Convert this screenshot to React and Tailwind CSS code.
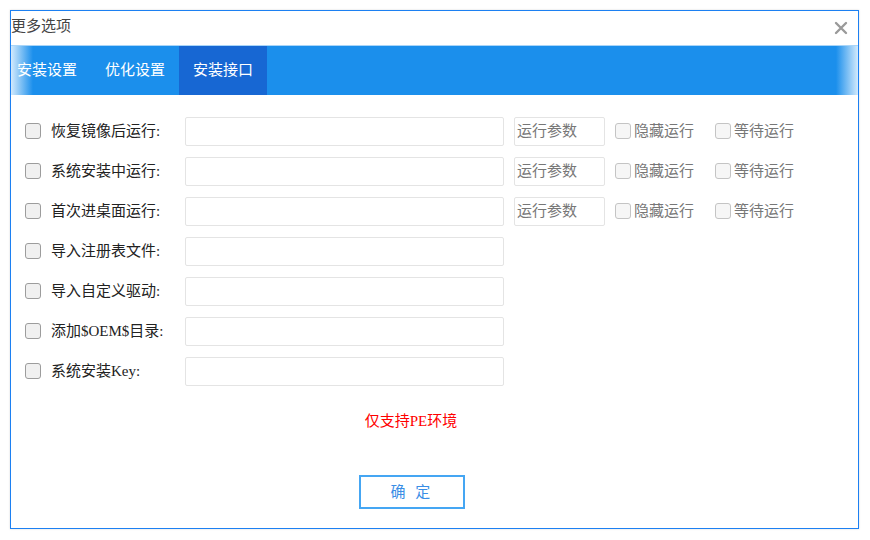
import React from "react";

const ROWS = [
  { label: "恢复镜像后运行:", extra: true },
  { label: "系统安装中运行:", extra: true },
  { label: "首次进桌面运行:", extra: true },
  { label: "导入注册表文件:" },
  { label: "导入自定义驱动:" },
  { label: "添加$OEM$目录:" },
  { label: "系统安装Key:" },
];

const TABS = ["安装设置", "优化设置", "安装接口"];

const font = { fontFamily: '"Liberation Serif", "Noto Sans CJK SC", serif' };

function Box({ light }) {
  return (
    <span
      className={`block h-[16px] w-[16px] shrink-0 rounded-[3px] border ${
        light ? "border-[#c4c4c4] bg-[#f6f6f6]" : "border-[#9c9c9c] bg-[#f0f0f0]"
      }`}
    />
  );
}

function Row({ label, extra }) {
  return (
    <div className="flex h-[40px] items-center">
      <div className="ml-[14px] flex items-center">
        <Box />
      </div>
      <span className="ml-[10px] w-[134px] text-[15px] text-[#222]">{label}</span>
      <div className="h-[29px] w-[319px] rounded-[2px] border border-[#e4e4e4] bg-white" />
      {extra && (
        <>
          <div className="ml-[10px] flex h-[29px] w-[91px] items-center rounded-[2px] border border-[#e4e4e4] pl-[2px] text-[15px] text-[#777]">
            运行参数
          </div>
          <div className="ml-[10px] flex items-center">
            <Box light />
            <span className="ml-[3px] text-[15px] text-[#777]">隐藏运行</span>
          </div>
          <div className="ml-[21px] flex items-center">
            <Box light />
            <span className="ml-[3px] text-[15px] text-[#777]">等待运行</span>
          </div>
        </>
      )}
    </div>
  );
}

export default function App() {
  return (
    <div className="h-[540px] w-[870px] bg-white p-[10px]" style={font}>
      <div className="h-[519px] w-[849px] overflow-hidden border border-[#1c80f2] bg-white shadow-[0_0_2px_rgba(0,0,0,0.15)]">
        <div className="flex h-[34px] items-center justify-between">
          <span className="mb-[3px] text-[15px] text-[#444]">更多选项</span>
          <svg width="14" height="14" viewBox="0 0 14 14" className="mr-[10px]">
            <path d="M2 2L12 12M12 2L2 12" stroke="#9a9a9a" strokeWidth="2.4" strokeLinecap="round" />
          </svg>
        </div>
        <div className="h-[1px] bg-[#a9d5f8]" />
        <div className="flex h-[49px] bg-[linear-gradient(to_right,#d3eafc,#1b8fec_22px,#1b8fec_calc(100%-22px),#d3eafc)]">
          {TABS.map((t, i) => (
            <div
              key={t}
              className={`flex h-full w-[88px] items-center justify-center text-[15px] text-white ${
                i === 0 ? "ml-[-8px]" : ""
              } ${i === 2 ? "bg-[#1767d3]" : ""}`}
            >
              {t}
            </div>
          ))}
        </div>
        <div className="pt-[16px]">
          {ROWS.map((r) => (
            <Row key={r.label} {...r} />
          ))}
        </div>
        <div className="ml-[300px] mt-[20px] w-[200px] text-center text-[15px] leading-[20px] text-[#ff0000]">
          仅支持PE环境
        </div>
        <button
          type="button"
          className="ml-[348px] mt-[44px] flex h-[34px] w-[106px] items-center justify-center border-2 border-[#45a6f3] bg-white text-[15px] tracking-[3px] text-[#3a8ee6]"
        >
          确 定
        </button>
      </div>
    </div>
  );
}
